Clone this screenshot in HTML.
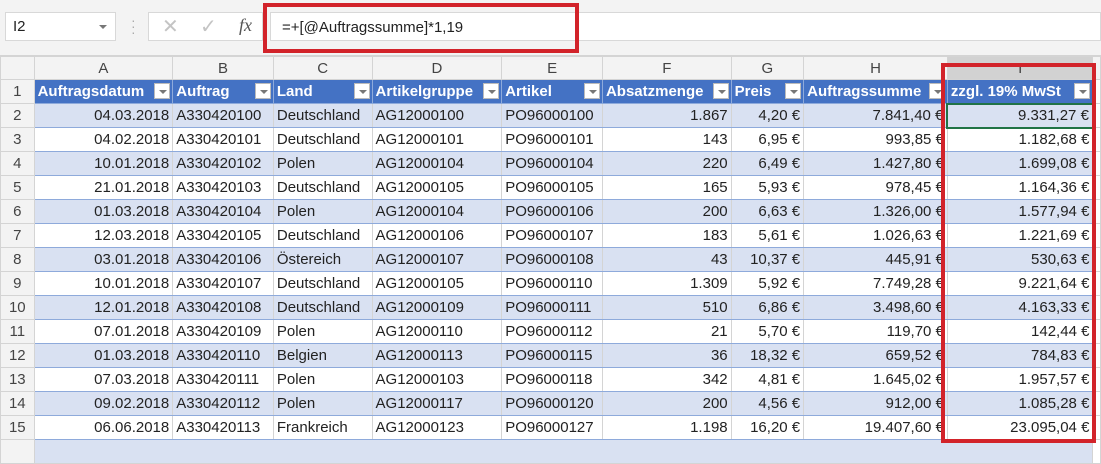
<!DOCTYPE html>
<html><head><meta charset="utf-8"><style>
*{margin:0;padding:0;box-sizing:border-box}
body{width:1101px;height:444px;overflow:hidden;background:#fff;font-family:"Liberation Sans",sans-serif;position:relative}
.top{position:absolute;left:0;top:0;width:1101px;height:56px;background:#f3f3f3;border-bottom:1px solid #d4d4d4}
.nb{position:absolute;left:5px;top:12px;width:111px;height:29px;background:#fff;border:1px solid #d8d8d8;font-size:15px;line-height:27px;padding-left:7px;color:#222}
.nb:after{content:"";position:absolute;right:8px;top:12px;border:4px solid transparent;border-top:4px solid #777}
.dots{position:absolute;left:131px;top:17px;color:#aaa;font-size:14px;line-height:6px;width:4px}
.btnbox{position:absolute;left:148px;top:12px;width:115px;height:29px;background:#fff;border:1px solid #d8d8d8}
.fxbox{position:absolute;left:270px;top:12px;width:831px;height:29px;background:#fff;border:1px solid #d8d8d8}
.fx{position:absolute;left:239px;top:15px;font-family:"Liberation Serif",serif;font-style:italic;font-size:18px;color:#555}
.formula{position:absolute;left:282px;top:19px;font-size:15px;color:#222}
.red{position:absolute;border:4px solid #d2232a}
table{position:absolute;left:0;top:56px;border-collapse:collapse;table-layout:fixed;font-size:15px}
td{height:24px;border:1px solid #d4d4d4;white-space:nowrap;overflow:hidden;padding:0 3px;color:#222}
tr.ch td{height:23px;background:#f3f3f3;text-align:center;color:#444;border-color:#d4d4d4}
td.rn{background:#f3f3f3;text-align:center;color:#444}
tr.h td.c{height:23px;background:#4472c4;color:#fff;font-weight:bold;border-color:#8eaadb;position:relative;padding-right:20px}
tr.h td.c i{position:absolute;right:2px;top:3px;width:16px;height:16px;background:#fff;border:1px solid #bbb}
tr.h td.c i:after{content:"";position:absolute;left:4px;top:6px;border:4px solid transparent;border-top:4px solid #777}
tr.b td.c{background:#d9e1f2}
td.r{text-align:right}
tr.d td.c{border-top:1px solid #8eaadb;border-bottom:1px solid #8eaadb;border-left:1px solid #d4d4d4}
</style></head><body>
<div class="top"></div>
<div class="nb">I2</div>
<div class="dots">·<br>·<br>·</div>
<div class="btnbox"></div>
<div class="fxbox"></div>
<div style="position:absolute;left:162px;top:14px;color:#c4c4c4;font-size:20px">✕</div>
<div style="position:absolute;left:200px;top:14px;color:#c4c4c4;font-size:20px">✓</div>
<div class="fx">fx</div>
<div class="formula">=+[@Auftragssumme]*1,19</div>
<table>
<colgroup><col style="width:34px"><col style="width:139px"><col style="width:101px"><col style="width:99px"><col style="width:130px"><col style="width:101px"><col style="width:129px"><col style="width:73px"><col style="width:144px"><col style="width:146px"><col style="width:5px"></colgroup>
<tr class="ch"><td style="background:#f3f3f3"></td><td>A</td><td>B</td><td>C</td><td>D</td><td>E</td><td>F</td><td>G</td><td>H</td><td style="background:#d2d2d2">I</td><td></td></tr>
<tr class="h"><td class="rn">1</td><td class="c">Auftragsdatum<i></i></td><td class="c">Auftrag<i></i></td><td class="c">Land<i></i></td><td class="c">Artikelgruppe<i></i></td><td class="c">Artikel<i></i></td><td class="c">Absatzmenge<i></i></td><td class="c">Preis<i></i></td><td class="c">Auftragssumme<i></i></td><td class="c">zzgl. 19% MwSt<i></i></td><td></td></tr>
<tr class="b d"><td class="rn">2</td><td class="c r">04.03.2018</td><td class="c">A330420100</td><td class="c">Deutschland</td><td class="c">AG12000100</td><td class="c">PO96000100</td><td class="c r">1.867</td><td class="c r">4,20 €</td><td class="c r">7.841,40 €</td><td class="c r" style="border:2px solid #217346">9.331,27 €</td><td></td></tr>
<tr class="d"><td class="rn">3</td><td class="c r">04.02.2018</td><td class="c">A330420101</td><td class="c">Deutschland</td><td class="c">AG12000101</td><td class="c">PO96000101</td><td class="c r">143</td><td class="c r">6,95 €</td><td class="c r">993,85 €</td><td class="c r">1.182,68 €</td><td></td></tr>
<tr class="b d"><td class="rn">4</td><td class="c r">10.01.2018</td><td class="c">A330420102</td><td class="c">Polen</td><td class="c">AG12000104</td><td class="c">PO96000104</td><td class="c r">220</td><td class="c r">6,49 €</td><td class="c r">1.427,80 €</td><td class="c r">1.699,08 €</td><td></td></tr>
<tr class="d"><td class="rn">5</td><td class="c r">21.01.2018</td><td class="c">A330420103</td><td class="c">Deutschland</td><td class="c">AG12000105</td><td class="c">PO96000105</td><td class="c r">165</td><td class="c r">5,93 €</td><td class="c r">978,45 €</td><td class="c r">1.164,36 €</td><td></td></tr>
<tr class="b d"><td class="rn">6</td><td class="c r">01.03.2018</td><td class="c">A330420104</td><td class="c">Polen</td><td class="c">AG12000104</td><td class="c">PO96000106</td><td class="c r">200</td><td class="c r">6,63 €</td><td class="c r">1.326,00 €</td><td class="c r">1.577,94 €</td><td></td></tr>
<tr class="d"><td class="rn">7</td><td class="c r">12.03.2018</td><td class="c">A330420105</td><td class="c">Deutschland</td><td class="c">AG12000106</td><td class="c">PO96000107</td><td class="c r">183</td><td class="c r">5,61 €</td><td class="c r">1.026,63 €</td><td class="c r">1.221,69 €</td><td></td></tr>
<tr class="b d"><td class="rn">8</td><td class="c r">03.01.2018</td><td class="c">A330420106</td><td class="c">Östereich</td><td class="c">AG12000107</td><td class="c">PO96000108</td><td class="c r">43</td><td class="c r">10,37 €</td><td class="c r">445,91 €</td><td class="c r">530,63 €</td><td></td></tr>
<tr class="d"><td class="rn">9</td><td class="c r">10.01.2018</td><td class="c">A330420107</td><td class="c">Deutschland</td><td class="c">AG12000105</td><td class="c">PO96000110</td><td class="c r">1.309</td><td class="c r">5,92 €</td><td class="c r">7.749,28 €</td><td class="c r">9.221,64 €</td><td></td></tr>
<tr class="b d"><td class="rn">10</td><td class="c r">12.01.2018</td><td class="c">A330420108</td><td class="c">Deutschland</td><td class="c">AG12000109</td><td class="c">PO96000111</td><td class="c r">510</td><td class="c r">6,86 €</td><td class="c r">3.498,60 €</td><td class="c r">4.163,33 €</td><td></td></tr>
<tr class="d"><td class="rn">11</td><td class="c r">07.01.2018</td><td class="c">A330420109</td><td class="c">Polen</td><td class="c">AG12000110</td><td class="c">PO96000112</td><td class="c r">21</td><td class="c r">5,70 €</td><td class="c r">119,70 €</td><td class="c r">142,44 €</td><td></td></tr>
<tr class="b d"><td class="rn">12</td><td class="c r">01.03.2018</td><td class="c">A330420110</td><td class="c">Belgien</td><td class="c">AG12000113</td><td class="c">PO96000115</td><td class="c r">36</td><td class="c r">18,32 €</td><td class="c r">659,52 €</td><td class="c r">784,83 €</td><td></td></tr>
<tr class="d"><td class="rn">13</td><td class="c r">07.03.2018</td><td class="c">A330420111</td><td class="c">Polen</td><td class="c">AG12000103</td><td class="c">PO96000118</td><td class="c r">342</td><td class="c r">4,81 €</td><td class="c r">1.645,02 €</td><td class="c r">1.957,57 €</td><td></td></tr>
<tr class="b d"><td class="rn">14</td><td class="c r">09.02.2018</td><td class="c">A330420112</td><td class="c">Polen</td><td class="c">AG12000117</td><td class="c">PO96000120</td><td class="c r">200</td><td class="c r">4,56 €</td><td class="c r">912,00 €</td><td class="c r">1.085,28 €</td><td></td></tr>
<tr class="d"><td class="rn">15</td><td class="c r">06.06.2018</td><td class="c">A330420113</td><td class="c">Frankreich</td><td class="c">AG12000123</td><td class="c">PO96000127</td><td class="c r">1.198</td><td class="c r">16,20 €</td><td class="c r">19.407,60 €</td><td class="c r">23.095,04 €</td><td></td></tr>
<tr class="b"><td class="rn"></td><td class="c" colspan="9"></td><td></td></tr>
</table>
<div class="red" style="left:263px;top:3px;width:316px;height:50px"></div>
<div class="red" style="left:941px;top:63px;width:155px;height:380px"></div>
</body></html>
